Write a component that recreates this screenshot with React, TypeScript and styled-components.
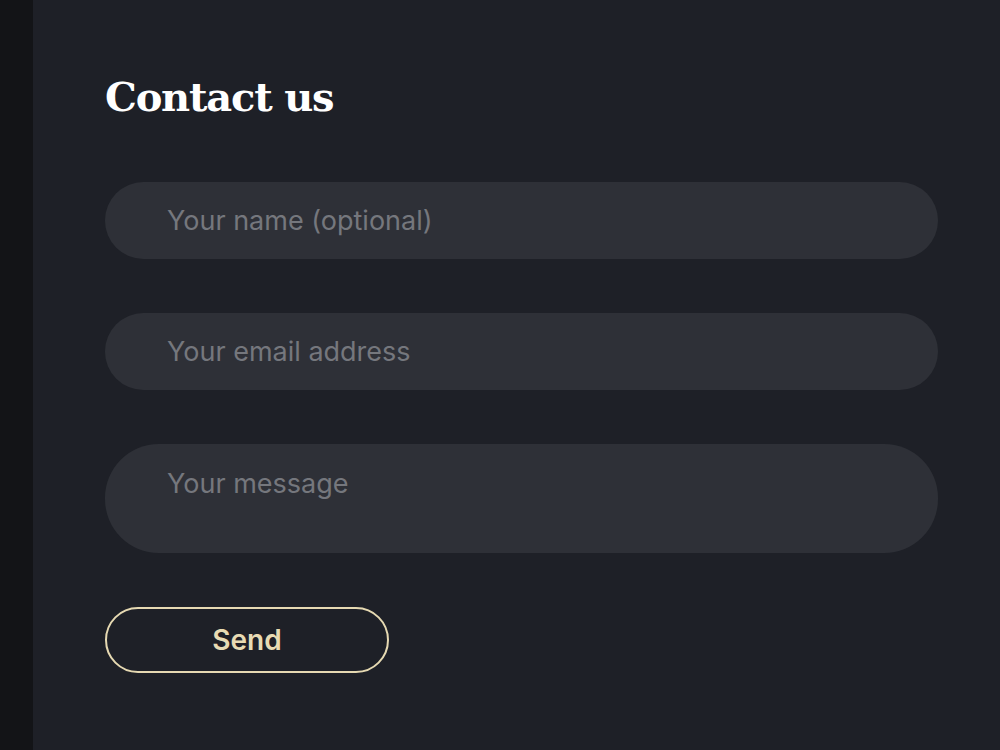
import React from "react";
import styled, { createGlobalStyle } from "styled-components";

const Global = createGlobalStyle`
  html, body { margin: 0; padding: 0; background: #1e2027; }
  body { font-family: Inter, "Noto Sans", sans-serif; }
  * { box-sizing: border-box; }
`;

const Page = styled.div`
  display: flex;
  width: 1000px;
  height: 750px;
  overflow: hidden;
  background: #1e2027;
`;

const SideStrip = styled.div`
  width: 33px;
  flex: none;
  background: #131417;
`;

const Main = styled.main`
  flex: 1;
  padding: 70px 62px 0 72px;
  display: flex;
  flex-direction: column;
`;

const Title = styled.h1`
  margin: 0 0 58px 0;
  font-family: "DejaVu Serif", "Liberation Serif", serif;
  font-weight: 700;
  font-size: 40px;
  line-height: 54px;
  color: #ffffff;
  letter-spacing: -1.2px;
`;

const Form = styled.form`
  display: flex;
  flex-direction: column;
  gap: 54px;
`;

const fieldBase = `
  width: 100%;
  border: none;
  outline: none;
  background: #2e3037;
  color: #e5e5e5;
  font-family: Inter, "Noto Sans", sans-serif;
  font-size: 27px;
  padding: 0 62px;
  &::placeholder { color: #75777d; opacity: 1; }
`;

const Input = styled.input`
  ${fieldBase}
  height: 77px;
  border-radius: 39px;
  line-height: 77px;
`;

const TextArea = styled.textarea`
  ${fieldBase}
  height: 109px;
  border-radius: 54px;
  padding-top: 24px;
  line-height: 32px;
  resize: none;
  display: block;
`;

const SendButton = styled.button`
  width: 284px;
  height: 66px;
  border: 2px solid #e6d9b2;
  border-radius: 33px;
  background: transparent;
  color: #e8dbb3;
  font-family: Inter, "Noto Sans", sans-serif;
  font-weight: 600;
  font-size: 28px;
  cursor: pointer;
  padding: 0;
`;

export default function App() {
  return (
    <>
      <Global />
      <Page>
        <SideStrip />
        <Main>
          <Title>Contact us</Title>
          <Form onSubmit={(e) => e.preventDefault()}>
            <Input type="text" placeholder="Your name (optional)" />
            <Input type="email" placeholder="Your email address" />
            <TextArea placeholder="Your message" />
            <SendButton type="submit">Send</SendButton>
          </Form>
        </Main>
      </Page>
    </>
  );
}
